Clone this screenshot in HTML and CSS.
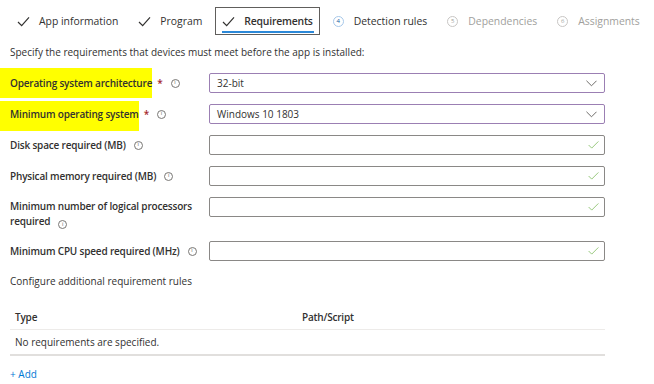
FILE: index.html
```html
<!DOCTYPE html>
<html lang="en">
<head>
<meta charset="utf-8">
<title>Requirements</title>
<link rel="stylesheet" href="styles.css">
</head>
<body>
<nav class="tabs">
  <div class="tab done">
    <svg class="chk" viewBox="0 0 14 12" width="13" height="11"><path d="M1 6.5 L5 10.5 L13 1.5" fill="none" stroke="#323130" stroke-width="1.3"/></svg>
    <span>App information</span>
  </div>
  <div class="tab done">
    <svg class="chk" viewBox="0 0 14 12" width="13" height="11"><path d="M1 6.5 L5 10.5 L13 1.5" fill="none" stroke="#323130" stroke-width="1.3"/></svg>
    <span>Program</span>
  </div>
  <div class="tab done active">
    <svg class="chk" viewBox="0 0 14 12" width="13" height="11"><path d="M1 6.5 L5 10.5 L13 1.5" fill="none" stroke="#323130" stroke-width="1.3"/></svg>
    <span>Requirements</span>
  </div>
  <div class="tab next">
    <span class="num">4</span>
    <span>Detection rules</span>
  </div>
  <div class="tab off">
    <span class="num">5</span>
    <span>Dependencies</span>
  </div>
  <div class="tab off">
    <span class="num">6</span>
    <span>Assignments</span>
  </div>
</nav>

<p class="desc">Specify the requirements that devices must meet before the app is installed:</p>

<div class="form">
  <div class="label"><span class="hl hl1">Operating system architecture</span><span class="req">*</span><span class="info">i</span></div>
  <div class="field select"><span>32-bit</span>
    <svg viewBox="0 0 12 7" width="11" height="7"><path d="M0.5 0.5 L6 6 L11.5 0.5" fill="none" stroke="#605e5c" stroke-width="1"/></svg>
  </div>

  <div class="label"><span class="hl hl2">Minimum operating system</span><span class="req">*</span><span class="info">i</span></div>
  <div class="field select"><span>Windows 10 1803</span>
    <svg viewBox="0 0 12 7" width="11" height="7"><path d="M0.5 0.5 L6 6 L11.5 0.5" fill="none" stroke="#605e5c" stroke-width="1"/></svg>
  </div>

  <div class="label">Disk space required (MB)<span class="info">i</span></div>
  <div class="field text"><svg viewBox="0 0 12 9" width="11" height="8"><path d="M0.5 4.5 L4 8 L11.5 0.5" fill="none" stroke="#8dc26f" stroke-width="1"/></svg></div>

  <div class="label">Physical memory required (MB)<span class="info">i</span></div>
  <div class="field text"><svg viewBox="0 0 12 9" width="11" height="8"><path d="M0.5 4.5 L4 8 L11.5 0.5" fill="none" stroke="#8dc26f" stroke-width="1"/></svg></div>

  <div class="label two">Minimum number of logical processors required<span class="info">i</span></div>
  <div class="field text top"><svg viewBox="0 0 12 9" width="11" height="8"><path d="M0.5 4.5 L4 8 L11.5 0.5" fill="none" stroke="#8dc26f" stroke-width="1"/></svg></div>

  <div class="label">Minimum CPU speed required (MHz)<span class="info">i</span></div>
  <div class="field text"><svg viewBox="0 0 12 9" width="11" height="8"><path d="M0.5 4.5 L4 8 L11.5 0.5" fill="none" stroke="#8dc26f" stroke-width="1"/></svg></div>
</div>

<p class="sub">Configure additional requirement rules</p>

<div class="table">
  <div class="thead">
    <span class="c1">Type</span>
    <span class="c2">Path/Script</span>
  </div>
  <div class="trow">No requirements are specified.</div>
</div>

<a class="add" href="#">+ Add</a>
</body>
</html>
```

FILE: styles.css
```css
* { box-sizing: border-box; }
html, body { margin: 0; padding: 0; background: #fff; }
body {
  font-family: "Open Sans", "Noto Sans", sans-serif;
  color: #323130;
  font-size: 10px;
  width: 654px;
  height: 384px;
  overflow: hidden;
}

.tabs {
  display: flex;
  align-items: center;
  height: 40px;
  padding: 2px 0 0 10px;
  gap: 6px;
}
.tab {
  display: flex;
  align-items: center;
  gap: 9px;
  height: 28px;
  padding: 0 7px;
  font-size: 10.4px;
  white-space: nowrap;
  position: relative;
}
.tab .chk { flex: none; }
.tab.active {
  border: 1px solid #605e5c;
  padding: 0 6px;
  font-weight: 600;
  letter-spacing: -0.2px;
}
.tab.active::after {
  content: "";
  position: absolute;
  left: 6px;
  right: 5px;
  bottom: 1px;
  height: 2px;
  background: #2b88d8;
}
.tab .num {
  width: 11px;
  height: 11px;
  border-radius: 50%;
  border: 1px solid #c8c6c4;
  font-size: 6px;
  display: flex;
  align-items: center;
  justify-content: center;
  line-height: 1;
  margin-right: 1px;
}
.tab.next .num { border-color: #a6c8ea; color: #0f5aa0; }
.tab.off { color: #a19f9d; }
.tab.off .num { color: #a19f9d; }

.desc {
  margin: 5px 0 0 10px;
  line-height: 15px;
}

.form {
  display: grid;
  grid-template-columns: 199px 396px;
  grid-template-rows: 20px 20px 20px 20px 33px 20px;
  row-gap: 11px;
  margin: 13px 0 0 10px;
}
.label {
  display: flex;
  align-items: center;
  font-weight: 600;
  font-size: 10px;
  letter-spacing: -0.18px;
  line-height: 15px;
  white-space: nowrap;
}
.label.two {
  display: block;
  white-space: normal;
  align-self: start;
  padding-top: 2px;
}
.label.two .info { display: inline-flex; vertical-align: -1px; }
.hl {
  display: block;
  flex: none;
  background: #ffff00;
  margin-left: -10px;
  padding-left: 10px;
}
.hl1 { padding-top: 7.5px; padding-bottom: 7.5px; padding-right: 0; }
.hl2 { padding-top: 5.5px; padding-bottom: 9.5px; margin-top: 4px; }
.req {
  color: #a4262c;
  margin-left: 5px;
}
.hl2 + .req { margin-top: 0; }
.info {
  flex: none;
  width: 9px;
  height: 9px;
  border: 1px solid #797775;
  border-radius: 50%;
  font-size: 5.5px;
  font-weight: 400;
  letter-spacing: 0;
  color: #605e5c;
  display: inline-flex;
  align-items: center;
  justify-content: center;
  line-height: 1;
  margin-left: 8px;
}
.field {
  height: 20px;
  border: 1px solid #8a8886;
  border-radius: 2px;
  display: flex;
  align-items: center;
  justify-content: space-between;
  padding: 0 7px 0 7px;
  align-self: center;
  font-size: 10px;
}
.field.top { align-self: start; }
.field.select { border-color: #9b7fb3; }
.field.text { justify-content: flex-end; padding-right: 5px; }

.sub {
  margin: 13px 0 0 10px;
  line-height: 15px;
}

.table {
  margin: 15px 0 0 10px;
  width: 595px;
}
.thead {
  display: flex;
  height: 26px;
  align-items: center;
  padding-left: 5px;
  font-weight: 600;
  letter-spacing: -0.2px;
  border-bottom: 1px solid #edebe9;
}
.thead .c1 { width: 287px; }
.trow {
  height: 26px;
  display: flex;
  align-items: center;
  padding-left: 5px;
  border-bottom: 2px solid #e1dfdd;
}
.add {
  display: inline-block;
  margin: 11px 0 0 10px;
  line-height: 15px;
  color: #0078d4;
  text-decoration: none;
}
```
